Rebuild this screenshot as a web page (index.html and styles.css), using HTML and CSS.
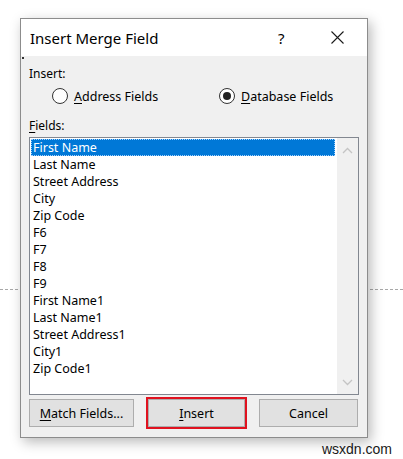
FILE: index.html
```html
<!DOCTYPE html>
<html lang="en">
<head>
    <meta charset="UTF-8">
    <meta name="viewport" content="width=device-width, initial-scale=1.0">
    <title>Insert Merge Field</title>
    <link rel="stylesheet" href="styles.css">
</head>
<body>
    <div class="page-break"></div>

    <div class="dialog">
        <div class="titlebar">
            <span class="title">Insert Merge Field</span>
            <span class="help">?</span>
            <span class="close">
                <svg width="13" height="13" viewBox="0 0 13 13">
                    <path d="M0.5 0.5 L12.5 12.5 M12.5 0.5 L0.5 12.5" stroke="#1a1a1a" stroke-width="1.1" fill="none"/>
                </svg>
            </span>
        </div>

        <div class="content">
            <span class="focus-dot"></span>
            <div class="label">Insert:</div>
            <div class="radios">
                <label class="radio">
                    <span class="circle"></span>
                    <span><u>A</u>ddress Fields</span>
                </label>
                <label class="radio">
                    <span class="circle checked"></span>
                    <span><u>D</u>atabase Fields</span>
                </label>
            </div>
            <div class="label fields-label"><u>F</u>ields:</div>

            <div class="listbox">
                <ul class="items">
                    <li class="selected">First Name</li>
                    <li>Last Name</li>
                    <li>Street Address</li>
                    <li>City</li>
                    <li>Zip Code</li>
                    <li>F6</li>
                    <li>F7</li>
                    <li>F8</li>
                    <li>F9</li>
                    <li>First Name1</li>
                    <li>Last Name1</li>
                    <li>Street Address1</li>
                    <li>City1</li>
                    <li>Zip Code1</li>
                </ul>
                <div class="scrollbar">
                    <svg width="11" height="7" viewBox="0 0 11 7">
                        <path d="M1 6 L5.5 1.5 L10 6" stroke="#c4c4c4" stroke-width="1.3" fill="none"/>
                    </svg>
                    <svg width="11" height="7" viewBox="0 0 11 7">
                        <path d="M1 1 L5.5 5.5 L10 1" stroke="#c4c4c4" stroke-width="1.3" fill="none"/>
                    </svg>
                </div>
            </div>

            <div class="buttons">
                <button class="btn btn-match"><u>M</u>atch Fields...</button>
                <button class="btn btn-insert"><u>I</u>nsert</button>
                <button class="btn btn-cancel">Cancel</button>
            </div>
        </div>
    </div>

    <div class="watermark">wsxdn.com</div>
</body>
</html>
```

FILE: styles.css
```css
body {
    margin: 0;
    padding: 18px 0 0 20px;
    background: #fff;
    font-family: "Noto Sans", "Open Sans", sans-serif;
    font-size: 12px;
    color: #000;
    position: relative;
    height: 459px;
    box-sizing: border-box;
    overflow: hidden;
}

/* dashed page break line behind the dialog */
.page-break {
    position: absolute;
    left: 0;
    right: 0;
    top: 289px;
    border-top: 1px dashed #a8a8a8;
}

.dialog {
    position: relative;
    z-index: 1;
    width: 348px;
    border: 1px solid #8c8c8c;
    box-sizing: border-box;
    background: #f0f0f0;
    box-shadow: 3px 4px 12px rgba(0, 0, 0, 0.28);
}

.titlebar {
    height: 37px;
    background: #fff;
    display: flex;
    align-items: center;
    padding-left: 9px;
}
.title {
    font-size: 15px;
    flex: 1;
}
.help {
    font-size: 15px;
    width: 53px;
}
.close {
    width: 36px;
    display: flex;
    align-items: center;
}
.close svg {
    display: block;
}

.content {
    position: relative;
    padding: 10px 8px 10px 8px;
}
.focus-dot {
    position: absolute;
    left: 1px;
    top: 1px;
    width: 2px;
    height: 2px;
    background: #333;
}

.label {
    line-height: 16px;
    height: 16px;
}
u {
    text-decoration-thickness: 1px;
    text-underline-offset: 2px;
}

.radios {
    display: flex;
    height: 20px;
    margin-top: 4px;
    padding-left: 23px;
}
.radio {
    display: flex;
    align-items: center;
    gap: 6px;
    font-size: 12.5px;
}
.radio:first-child {
    width: 167px;
}
.circle {
    width: 14px;
    height: 14px;
    border: 1px solid #333;
    border-radius: 50%;
    background: #fff;
    display: flex;
    align-items: center;
    justify-content: center;
}
.circle.checked::after {
    content: "";
    width: 8px;
    height: 8px;
    border-radius: 50%;
    background: #222;
}

.fields-label {
    margin-top: 12px;
}

.listbox {
    margin-top: 3px;
    height: 258px;
    border: 1px solid #828790;
    box-sizing: border-box;
    background: #fff;
    display: flex;
}
.items {
    list-style: none;
    margin: 0;
    padding: 1px 0 0 1px;
    flex: 1;
}
.items li {
    height: 17px;
    line-height: 17px;
    padding-left: 2px;
    font-size: 12.5px;
    margin-right: 2px;
}
.items li.selected {
    background: #0078d7;
    color: #fff;
    outline: 1px dotted #9fd0ff;
    outline-offset: -1px;
}
.scrollbar {
    width: 21px;
    background: #f0f0f0;
    display: flex;
    flex-direction: column;
    justify-content: space-between;
    align-items: center;
    padding: 9px 0 8px;
}
.scrollbar svg {
    display: block;
}

.buttons {
    display: flex;
    gap: 13px;
    margin-top: 4px;
}
.btn {
    height: 28px;
    border: 1px solid #adadad;
    background: #e1e1e1;
    font-family: inherit;
    font-size: 12.5px;
    color: #000;
    padding: 0;
}
.btn-match {
    width: 105px;
}
.btn-insert {
    width: 97px;
    margin-left: 1px;
    margin-right: 1px;
    outline: 2px solid #e0121f;
    outline-offset: 0;
}
.btn-cancel {
    width: 99px;
}

.watermark {
    text-align: right;
    padding-right: 11px;
    margin-top: 3px;
    font-family: "Liberation Sans", sans-serif;
    font-size: 14px;
    color: #1a1a1a;
}
```
